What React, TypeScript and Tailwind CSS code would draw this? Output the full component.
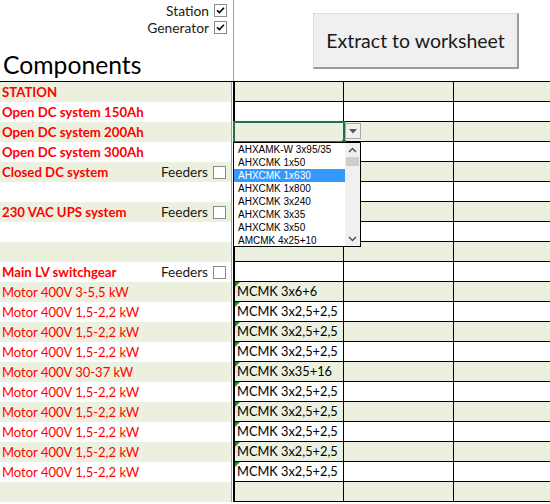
import React from "react";

type Row = { label?: string; bold?: boolean; feeders?: boolean; cable?: string };

const rows: Row[] = [
  { label: "STATION", bold: true },
  { label: "Open DC system 150Ah", bold: true },
  { label: "Open DC system 200Ah", bold: true },
  { label: "Open DC system 300Ah", bold: true },
  { label: "Closed DC system", bold: true, feeders: true },
  {},
  { label: "230 VAC UPS system", bold: true, feeders: true },
  {},
  {},
  { label: "Main LV switchgear", bold: true, feeders: true },
  { label: "Motor 400V 3-5,5 kW", cable: "MCMK 3x6+6" },
  { label: "Motor 400V 1,5-2,2 kW", cable: "MCMK 3x2,5+2,5" },
  { label: "Motor 400V 1,5-2,2 kW", cable: "MCMK 3x2,5+2,5" },
  { label: "Motor 400V 1,5-2,2 kW", cable: "MCMK 3x2,5+2,5" },
  { label: "Motor 400V 30-37 kW", cable: "MCMK 3x35+16" },
  { label: "Motor 400V 1,5-2,2 kW", cable: "MCMK 3x2,5+2,5" },
  { label: "Motor 400V 1,5-2,2 kW", cable: "MCMK 3x2,5+2,5" },
  { label: "Motor 400V 1,5-2,2 kW", cable: "MCMK 3x2,5+2,5" },
  { label: "Motor 400V 1,5-2,2 kW", cable: "MCMK 3x2,5+2,5" },
  { label: "Motor 400V 1,5-2,2 kW", cable: "MCMK 3x2,5+2,5" },
  {},
];

const items = [
  "AHXAMK-W 3x95/35",
  "AHXCMK 1x50",
  "AHXCMK 1x630",
  "AHXCMK 1x800",
  "AHXCMK 3x240",
  "AHXCMK 3x35",
  "AHXCMK 3x50",
  "AMCMK 4x25+10",
];

function Box({ checked }: { checked?: boolean }) {
  return (
    <div className="w-[13px] h-[13px] border border-[#8a8a8a] bg-white flex items-center justify-center shrink-0">
      {checked && (
        <svg width="9" height="9" viewBox="0 0 9 9">
          <path d="M1 4.2 L3.4 6.6 L8 1.8" stroke="#000" strokeWidth="1.6" fill="none" />
        </svg>
      )}
    </div>
  );
}

export default function App() {
  const font = { fontFamily: "Lato, 'Liberation Sans', sans-serif" };
  return (
    <div className="relative w-[550px] h-[504px] bg-white overflow-hidden" style={font}>
      {/* header */}
      <div className="flex h-[81px]">
        <div className="relative w-[234px] h-full border-r border-[#a0a0a0]">
          <div className="absolute right-[6px] top-[4px] flex flex-col items-end gap-[4px]">
            <div className="flex items-center gap-[5px] text-[13.8px] leading-[13px] text-[#1a1a1a]">
              <span>Station</span>
              <Box checked />
            </div>
            <div className="flex items-center gap-[5px] text-[13.8px] leading-[13px] text-[#1a1a1a]">
              <span>Generator</span>
              <Box checked />
            </div>
          </div>
          <div className="absolute left-[3px] top-[50px] text-[24.7px] leading-[30px] text-black">
            Components
          </div>
        </div>
        <div className="flex-1 pl-[79px] pt-[13px]">
          <div className="w-[206px] h-[56px] bg-[#f0f0f0] border-t border-l border-[#dcdcdc] border-r-2 border-b-2 border-r-[#9a9a9a] border-b-[#9a9a9a] flex items-center justify-center text-[19.5px] text-[#1a1a1a]">
            Extract to worksheet
          </div>
        </div>
      </div>
      <div className="h-px bg-black" />
      {/* rows */}
      {rows.map((r, i) => {
        const bg = i % 2 === 0 ? "bg-[#ebf1de]" : "bg-white";
        return (
          <div key={i} className="flex h-[20px]">
            <div className={`w-[231px] h-full ${bg} flex items-center justify-between pl-[2px] pr-[5px]`}>
              <span
                className={`leading-[20px] whitespace-nowrap text-[#ff0000] ${
                  r.bold ? "font-bold text-[13.2px]" : "text-[13px]"
                }`}
              >
                {r.label ?? ""}
              </span>
              {r.feeders && (
                <span className="flex items-center gap-[5px] text-[13.6px] text-[#1a1a1a]">
                  <span>Feeders</span>
                  <Box />
                </span>
              )}
            </div>
            <div className="w-px h-full bg-[#a0a0a0]" />
            <div className="w-px h-full bg-white" />
            <div className="w-[2px] h-full bg-black" />
            <div className={`relative w-[109px] h-full ${bg} border-r border-b border-black flex items-center pl-[2px]`}>
              {r.cable && (
                <>
                  <svg className="absolute left-0 top-0" width="5" height="5" viewBox="0 0 5 5">
                    <path d="M0 0 H5 L0 5 Z" fill="#1e8a2e" />
                  </svg>
                  <span className="text-[12.8px] leading-[19px] text-black whitespace-nowrap">{r.cable}</span>
                </>
              )}
            </div>
            <div className={`w-[110px] h-full ${bg} border-r border-b border-black`} />
            <div className={`flex-1 h-full ${bg} border-b border-black`} />
          </div>
        );
      })}

      {/* selected cell */}
      <div className="absolute left-[233px] top-[121px] w-[112px] h-[22px] border-2 border-[#217346]" />
      <div className="absolute left-[342px] top-[140px] w-[4px] h-[4px] bg-[#217346]" />
      {/* dropdown arrow */}
      <div className="absolute left-[345px] top-[123px] w-[16px] h-[16px] bg-[#f0f0f0] border border-[#a8a8a8] flex items-center justify-center">
        <svg width="8" height="5" viewBox="0 0 8 5">
          <path d="M0 0 H8 L4 4.5 Z" fill="#555" />
        </svg>
      </div>
      {/* list */}
      <div
        className="absolute left-[233px] top-[142px] w-[128px] h-[105px] bg-white border border-black flex"
        style={{ fontFamily: "'Liberation Sans', Arial, sans-serif" }}
      >
        <div className="w-[111px] flex flex-col">
          {items.map((t, i) => (
            <div
              key={i}
              className={`h-[13px] leading-[13px] text-[10px] pl-[4px] whitespace-nowrap ${
                i === 2 ? "bg-[#3399ff] text-white" : "text-black"
              }`}
            >
              {t}
            </div>
          ))}
        </div>
        <div className="flex-1 bg-[#f0f0f0] flex flex-col items-center">
          <div className="h-[14px] flex items-center justify-center">
            <svg width="9" height="6" viewBox="0 0 9 6">
              <path d="M1 5 L4.5 1.5 L8 5" stroke="#505050" strokeWidth="1.5" fill="none" />
            </svg>
          </div>
          <div className="w-[13px] h-[9px] bg-[#cdcdcd]" />
          <div className="flex-1" />
          <div className="h-[14px] flex items-center justify-center">
            <svg width="9" height="6" viewBox="0 0 9 6">
              <path d="M1 1 L4.5 4.5 L8 1" stroke="#505050" strokeWidth="1.5" fill="none" />
            </svg>
          </div>
        </div>
      </div>
    </div>
  );
}
